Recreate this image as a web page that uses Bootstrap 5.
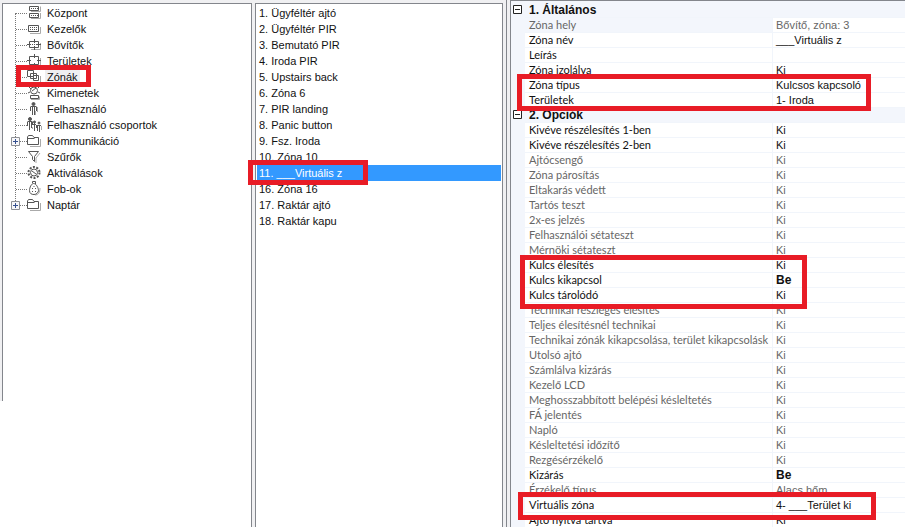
<!DOCTYPE html>
<html lang="hu">
<head>
<meta charset="utf-8">
<meta name="viewport" content="width=device-width, initial-scale=1">
<title>Zónák</title>
<link href="https://cdn.jsdelivr.net/npm/bootstrap@5.3.0/dist/css/bootstrap.min.css" rel="stylesheet">
<style>
  body { font: 11px/16px "Liberation Sans", Arial, sans-serif; color: #111; background: #fff; }
  .panes { display: grid; grid-template-columns: 252fr 3px 248fr 3px 399fr; background: #f0f0f2; }
  .pane { border: 1px solid #83868c; border-bottom: 0; background: #fff; min-width: 0; }
  .lowered { margin-top: 3px; }
  .tree-pane { border-left: 0; border-top: 0; }
  .tree-box { border: 1px solid #83868c; border-width: 1px 0 0 1px; min-height: 398px; padding: 1px 0 0 10px; }
  .tree-gutter { border-left: 2px solid #f0f0f2; }
  .tree { position: relative; }
  .tree::before { content: ""; position: absolute; left: 2px; top: 8px; bottom: 8px; border-left: 1px dotted #777; }
  .tree a { height: 16px; color: #111; text-decoration: none; white-space: nowrap; }
  .tree a::before { content: ""; width: 11px; margin-left: 3px; border-top: 1px dotted #777; }
  .tree svg.ico { width: 16px; height: 16px; margin-right: 2px; fill: none; stroke: #555; }
  .tree .plus { position: absolute; left: -2px; width: 9px; height: 9px; z-index: 1; }
  .tree .label-text { padding: 0 2px; line-height: 14px; }
  .tree .current { background: #efeff1; }
  .zones { padding: 1px 1px 0; }
  .zones .list-group-item { border: 0; padding: 0 2px; height: 16px; line-height: 16px; color: #111; background: #fff; white-space: nowrap; }
  .zones .list-group-item.active { margin-top: 0; color: #fff; background: #3399ff; }
  .props-frame { border-left: 1px solid #83868c; padding-left: 3px; background: #f0f0f2; min-width: 0; }
  .props-pane { padding-top: 2px; background: #f3f6fc; }
  .props { width: 100%; table-layout: fixed; border-collapse: separate; border-spacing: 0; line-height: 14px; background: #fff; }
  .props col.edge { width: 14px; }
  .props col.name { width: 247px; }
  .props td, .props th { height: 15px; padding: 0 0 0 4px; border-bottom: 1px solid #f1f5fb; white-space: nowrap; overflow: hidden; font-weight: 400; }
  .props th { font-family: Lato, "Liberation Sans", Arial, sans-serif; }
  .props td { border-left: 1px solid #f1f5fb; padding-left: 3px; }
  .props .edge-cell, .props .group th, .props .picked th { background: #f3f6fc; }
  .props .edge-cell { padding: 2px 0 0 2px; vertical-align: top; }
  .props .group th, .props .set td { font-family: "Liberation Sans", Arial, sans-serif; font-size: 12px; font-weight: 700; }
  .props .off { color: #666; }
  .toggle { display: block; width: 9px; height: 9px; padding: 0; border: 0; background: none; line-height: 0; }
  .toggle svg { display: block; }
  .ring { position: absolute; border: 5px solid #e81c26; pointer-events: none; z-index: 2; }
  .ring-tree { left: 3px; top: 60px; width: 75px; height: 22px; }
  .ring-zone { left: -8px; top: 156px; width: 120px; height: 25px; }
  .ring-type { left: 6px; top: 73px; width: 354px; height: 37px; }
  .ring-key { left: 9px; top: 254px; width: 287px; height: 54px; }
  .ring-virtual { left: 7px; top: 491px; width: 358px; height: 28px; }
</style>
<script src="https://cdn.jsdelivr.net/npm/bootstrap@5.3.0/dist/js/bootstrap.bundle.min.js"></script>
</head>
<body>
<svg class="d-none">
  <symbol id="plus" viewBox="0 0 9 9"><path fill="#f7f7f9" stroke="#8e9095" d="M.5.5h8v8h-8z"/><path stroke="#35508f" d="M2 4.500h5M4.500 2v5"/></symbol>
  <symbol id="panel" viewBox="0 0 16 16"><path stroke="#aaa" d="M4 6.500h9.500v-5M4 13.500h9.500V8"/><path fill="#fff" d="M2.500 1.500h9v4h-9zM2.500 8.500h9v4h-9z"/><path stroke-dasharray="1 1" d="M4 3.500h7M4 10.500h7"/></symbol>
  <symbol id="keypad" viewBox="0 0 16 16"><path stroke="#aaa" d="M3 12.500h10.500V6"/><path fill="#fff" d="M1.500 4.500h10v6h-10z"/><path stroke-dasharray="1 1" d="M3 6.500h7M3 8.500h7"/></symbol>
  <symbol id="expander" viewBox="0 0 16 16"><path stroke="#aaa" d="M4 12.500h9.500V6"/><path fill="#fff" d="M2.500 4.500h9v6h-9z"/><path d="M0 7.500h4M10 7.500h4M7.500 2v4M7.500 9v4"/><path stroke-dasharray="1 1" d="M5 7.500h5"/></symbol>
  <symbol id="area" viewBox="0 0 16 16"><path stroke="#aaa" d="M4 13.500h9.500V5"/><path fill="#fff" d="M2.500 3.500h9v8h-9z"/><path d="M0 7.500h4M10 7.500h4M7.500 1v4M7.500 10v4"/></symbol>
  <symbol id="zone" viewBox="0 0 16 16"><path stroke="#aaa" d="M7 13.500h6.500V7"/><path d="M.5 1.500h6v6h-6zM3.500 4.500h6v5h-6zM6.500 6.500h5v5h-5z"/></symbol>
  <symbol id="output" viewBox="0 0 16 16"><path stroke="#aaa" d="M4 14.500h8.500v-3"/><circle cx="7" cy="5.500" r="3.500"/><path d="M3.500 10.500h8v3h-8zM5 6l4-3M2 2l2 2M1 8l2-1M13 1l-2 2M13 8l-2-1"/></symbol>
  <symbol id="user" viewBox="0 0 16 16"><path stroke="#aaa" d="M10.500 6v5M8.500 10v4"/><circle cx="6.500" cy="3" r="1.500" fill="#555"/><path d="M3.500 6v4M9.500 6v4M5.500 6v8M7.500 6v8M3.500 5.500h6"/></symbol>
  <symbol id="users" viewBox="0 0 16 16"><path stroke="#aaa" d="M14.500 9v4M5.500 10v2"/><circle cx="3" cy="2" r="1.500" fill="#555"/><circle cx="7.500" cy="5" r="1" fill="#555"/><circle cx="12" cy="6" r="1" fill="#555"/><path d="M.5 4.500h5M.5 5v4M5.500 5v3M2.500 5v8M4.500 5v6M7.500 6v8M9.500 8v3M12.500 8v7M10.500 9v5M6 7.500h3M10 8.500h4"/></symbol>
  <symbol id="folder" viewBox="0 0 16 16"><path stroke="#aaa" d="M3 13.500h10.500V6"/><path fill="#fff" d="M.5 11.500V4l1-1.500h4L7 4.500h4.500v7zM.5 5.500h7"/></symbol>
  <symbol id="filter" viewBox="0 0 16 16"><path stroke="#aaa" d="M13 4l-4 5v5"/><path fill="#fff" d="M1.500 2.500h10l-4 5v5l-2-2v-3z"/></symbol>
  <symbol id="gear" viewBox="0 0 16 16"><circle cx="7" cy="7.500" r="5.500" stroke-width="2" stroke-dasharray="2 1.450"/><circle cx="7" cy="7.500" r="3.500"/><path d="M5 6l4 3"/></symbol>
  <symbol id="fob" viewBox="0 0 16 16"><path stroke="#aaa" d="M13 7c0 5-2 7-5 7"/><path fill="#fff" d="M6.500 2.500c-2 0-4 4-4 7s2 4 4.500 4 4.500-2 4.500-4-2-7-5-7z"/><path d="M5.500 2V.500h3V3M5 7.500h1M8 7.500h1M5 10.500h1M8 10.500h1M6.500 5.500h1"/></symbol>
  <symbol id="minus" viewBox="0 0 9 9"><path fill="#fff" stroke="#222" d="M.5.5h8v8h-8z"/><path stroke="#222" d="M2 4.500h5"/></symbol>
</svg>

<main class="panes vh-100 overflow-hidden">
  <nav class="pane lowered tree-pane" aria-label="Beállítások">
    <div class="tree-gutter"><div class="tree-box">
      <div class="tree d-flex flex-column">
        <a href="#" class="d-flex align-items-center"><svg class="ico"><use href="#panel"/></svg><span class="label-text">Központ</span></a>
        <a href="#" class="d-flex align-items-center"><svg class="ico"><use href="#keypad"/></svg><span class="label-text">Kezelők</span></a>
        <a href="#" class="d-flex align-items-center"><svg class="ico"><use href="#expander"/></svg><span class="label-text">Bővítők</span></a>
        <a href="#" class="d-flex align-items-center"><svg class="ico"><use href="#area"/></svg><span class="label-text">Területek</span></a>
        <a href="#" class="d-flex align-items-center"><svg class="ico"><use href="#zone"/></svg><span class="label-text current">Zónák</span></a>
        <a href="#" class="d-flex align-items-center"><svg class="ico"><use href="#output"/></svg><span class="label-text">Kimenetek</span></a>
        <a href="#" class="d-flex align-items-center"><svg class="ico"><use href="#user"/></svg><span class="label-text">Felhasználó</span></a>
        <a href="#" class="d-flex align-items-center"><svg class="ico"><use href="#users"/></svg><span class="label-text">Felhasználó csoportok</span></a>
        <a href="#" class="d-flex align-items-center"><svg class="plus"><use href="#plus"/></svg><svg class="ico"><use href="#folder"/></svg><span class="label-text">Kommunikáció</span></a>
        <a href="#" class="d-flex align-items-center"><svg class="ico"><use href="#filter"/></svg><span class="label-text">Szűrők</span></a>
        <a href="#" class="d-flex align-items-center"><svg class="ico"><use href="#gear"/></svg><span class="label-text">Aktiválások</span></a>
        <a href="#" class="d-flex align-items-center"><svg class="ico"><use href="#fob"/></svg><span class="label-text">Fob-ok</span></a>
        <a href="#" class="d-flex align-items-center"><svg class="plus"><use href="#plus"/></svg><svg class="ico"><use href="#folder"/></svg><span class="label-text">Naptár</span></a>
        <div class="ring ring-tree"></div>
      </div>
    </div></div>
  </nav>
  <div></div>
  <section class="pane lowered zones position-relative">
    <div class="list-group rounded-0">
      <button type="button" class="list-group-item text-start">1. Ügyféltér ajtó</button>
      <button type="button" class="list-group-item text-start">2. Ügyféltér PIR</button>
      <button type="button" class="list-group-item text-start">3. Bemutató PIR</button>
      <button type="button" class="list-group-item text-start">4. Iroda PIR</button>
      <button type="button" class="list-group-item text-start">5. Upstairs back</button>
      <button type="button" class="list-group-item text-start">6. Zóna 6</button>
      <button type="button" class="list-group-item text-start">7. PIR landing</button>
      <button type="button" class="list-group-item text-start">8. Panic button</button>
      <button type="button" class="list-group-item text-start">9. Fsz. Iroda</button>
      <button type="button" class="list-group-item text-start">10. Zóna 10</button>
      <button type="button" class="list-group-item text-start active">11. ___Virtuális z</button>
      <button type="button" class="list-group-item text-start">16. Zóna 16</button>
      <button type="button" class="list-group-item text-start">17. Raktár ajtó</button>
      <button type="button" class="list-group-item text-start">18. Raktár kapu</button>
    </div>
    <div class="ring ring-zone"></div>
  </section>
  <div></div>
  <section class="props-frame">
    <div class="pane props-pane position-relative h-100 border-end-0">
      <table class="props">
        <colgroup><col class="edge"><col class="name"><col></colgroup>
        <tbody>
          <tr class="group"><td class="edge-cell border-0"><button type="button" class="toggle" aria-label="Általános"><svg width="9" height="9"><use href="#minus"/></svg></button></td><th colspan="2">1. Általános</th></tr>
          <tr class="off picked"><td class="edge-cell border-0"></td><th>Zóna hely</th><td>Bővítő, zóna: 3</td></tr>
          <tr><td class="edge-cell border-0"></td><th>Zóna név</th><td>___Virtuális z</td></tr>
          <tr><td class="edge-cell border-0"></td><th>Leírás</th><td></td></tr>
          <tr><td class="edge-cell border-0"></td><th>Zóna izolálva</th><td>Ki</td></tr>
          <tr><td class="edge-cell border-0"></td><th>Zóna típus</th><td>Kulcsos kapcsoló</td></tr>
          <tr><td class="edge-cell border-0"></td><th>Területek</th><td>1- Iroda</td></tr>
          <tr class="group"><td class="edge-cell border-0"><button type="button" class="toggle" aria-label="Opciók"><svg width="9" height="9"><use href="#minus"/></svg></button></td><th colspan="2">2. Opciók</th></tr>
          <tr><td class="edge-cell border-0"></td><th>Kivéve részélesítés 1-ben</th><td>Ki</td></tr>
          <tr><td class="edge-cell border-0"></td><th>Kivéve részélesítés 2-ben</th><td>Ki</td></tr>
          <tr class="off"><td class="edge-cell border-0"></td><th>Ajtócsengő</th><td>Ki</td></tr>
          <tr class="off"><td class="edge-cell border-0"></td><th>Zóna párosítás</th><td>Ki</td></tr>
          <tr class="off"><td class="edge-cell border-0"></td><th>Eltakarás védett</th><td>Ki</td></tr>
          <tr class="off"><td class="edge-cell border-0"></td><th>Tartós teszt</th><td>Ki</td></tr>
          <tr class="off"><td class="edge-cell border-0"></td><th>2x-es jelzés</th><td>Ki</td></tr>
          <tr class="off"><td class="edge-cell border-0"></td><th>Felhasználói sétateszt</th><td>Ki</td></tr>
          <tr class="off"><td class="edge-cell border-0"></td><th>Mérnöki sétateszt</th><td>Ki</td></tr>
          <tr><td class="edge-cell border-0"></td><th>Kulcs élesítés</th><td>Ki</td></tr>
          <tr class="set"><td class="edge-cell border-0"></td><th>Kulcs kikapcsol</th><td>Be</td></tr>
          <tr><td class="edge-cell border-0"></td><th>Kulcs tárolódó</th><td>Ki</td></tr>
          <tr class="off"><td class="edge-cell border-0"></td><th>Technikai részleges élesítés</th><td>Ki</td></tr>
          <tr class="off"><td class="edge-cell border-0"></td><th>Teljes élesítésnél technikai</th><td>Ki</td></tr>
          <tr class="off"><td class="edge-cell border-0"></td><th>Technikai zónák kikapcsolása, terület kikapcsolásk</th><td>Ki</td></tr>
          <tr class="off"><td class="edge-cell border-0"></td><th>Utolsó ajtó</th><td>Ki</td></tr>
          <tr class="off"><td class="edge-cell border-0"></td><th>Számlálva kizárás</th><td>Ki</td></tr>
          <tr class="off"><td class="edge-cell border-0"></td><th>Kezelő LCD</th><td>Ki</td></tr>
          <tr class="off"><td class="edge-cell border-0"></td><th>Meghosszabbított belépési késleltetés</th><td>Ki</td></tr>
          <tr class="off"><td class="edge-cell border-0"></td><th>FÁ jelentés</th><td>Ki</td></tr>
          <tr class="off"><td class="edge-cell border-0"></td><th>Napló</th><td>Ki</td></tr>
          <tr class="off"><td class="edge-cell border-0"></td><th>Késleltetési időzítő</th><td>Ki</td></tr>
          <tr class="off"><td class="edge-cell border-0"></td><th>Rezgésérzékelő</th><td>Ki</td></tr>
          <tr class="set"><td class="edge-cell border-0"></td><th>Kizárás</th><td>Be</td></tr>
          <tr class="off"><td class="edge-cell border-0"></td><th>Érzékelő típus</th><td>Alacs hőm</td></tr>
          <tr><td class="edge-cell border-0"></td><th>Virtuális zóna</th><td>4- ___Terület ki</td></tr>
          <tr><td class="edge-cell border-0"></td><th>Ajtó nyitva tartva</th><td>Ki</td></tr>
        </tbody>
      </table>
      <div class="ring ring-type"></div>
      <div class="ring ring-key"></div>
      <div class="ring ring-virtual"></div>
    </div>
  </section>
</main>
</body>
</html>
